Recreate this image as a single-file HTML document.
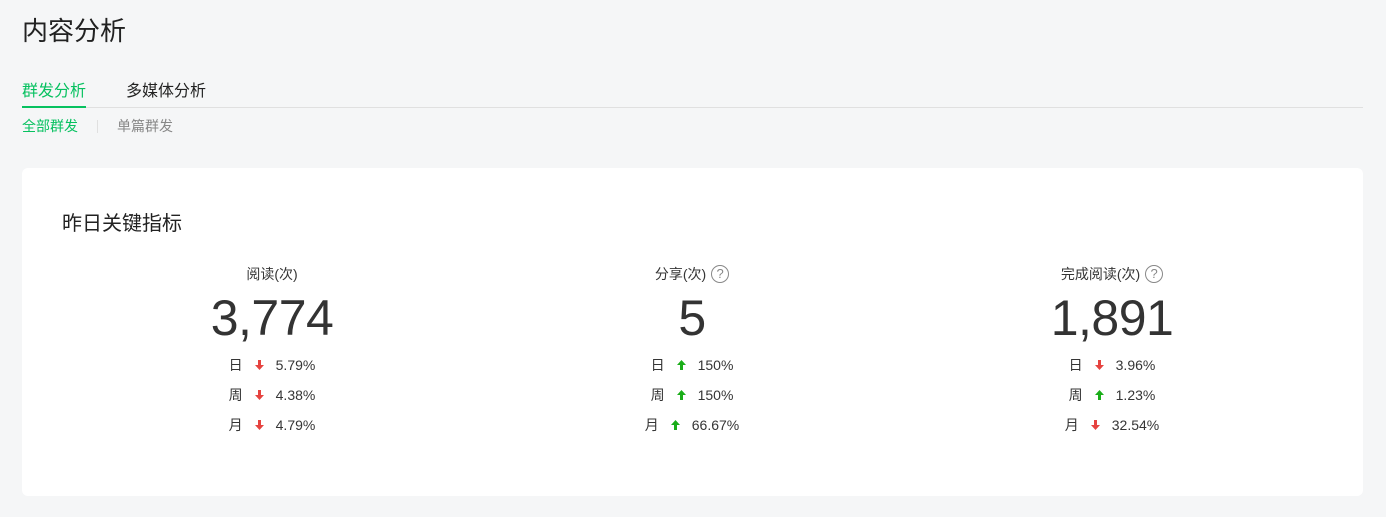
<!DOCTYPE html>
<html><head><meta charset="utf-8"><style>
*{margin:0;padding:0;box-sizing:border-box}
body{width:1386px;height:517px;background:#f5f6f7;font-family:"Liberation Sans","Noto Sans CJK SC",sans-serif;color:#353535;position:relative;overflow:hidden}
.t{position:absolute;left:22px;top:13px;font-size:26px;line-height:36px;color:#222}
.tabs{position:absolute;left:22px;top:78px;width:1341px;height:30px;border-bottom:1px solid #e0e0e0}
.tab{position:absolute;top:2px;font-size:16px;line-height:24px;height:28px}
.tab.a{left:0;color:#07c160;border-bottom:2px solid #07c160;width:64px}
.sub{position:absolute;top:116px;font-size:14px;line-height:20px}
.sep{position:absolute;left:97px;top:120px;width:1px;height:13px;background:#e0e0e0}
.card{position:absolute;left:22px;top:168px;width:1341px;height:328px;background:#fff;border-radius:6px}
.h{position:absolute;left:40px;top:44px;font-size:20px;line-height:24px;color:#222}
.col{position:absolute;top:96px;width:420px;text-align:center}
.lab{font-size:14px;line-height:20px;color:#353535;height:20px;display:flex;justify-content:center;align-items:center;gap:5px}
.q{width:18px;height:18px;border:1px solid #888;border-radius:50%;font-size:13px;line-height:16px;color:#888;text-align:center}
.num{font-size:50px;line-height:60px;color:#333;margin-top:4px;height:60px;letter-spacing:-0.5px}
.row{display:flex;justify-content:center;align-items:center;height:30px;font-size:14px;gap:12px}
.rows{margin-top:2px}
</style></head><body>
<div class="t">内容分析</div>
<div class="tabs"><div class="tab a">群发分析</div><div class="tab" style="left:104px;color:#222">多媒体分析</div></div>
<div class="sub" style="left:22px;color:#07c160">全部群发</div>
<div class="sep"></div>
<div class="sub" style="left:117px;color:#888">单篇群发</div>
<div class="card">
<div class="h">昨日关键指标</div>
<div class="col" style="left:40px">
<div class="lab">阅读(次)</div><div class="num">3,774</div>
<div class="rows">
<div class="row"><span>日</span><svg width="9" height="12" viewBox="0 0 9 12"><path d="M3 1h3v5h3L4.5 11 0 6h3z" fill="#e64340"/></svg><span>5.79%</span></div>
<div class="row"><span>周</span><svg width="9" height="12" viewBox="0 0 9 12"><path d="M3 1h3v5h3L4.5 11 0 6h3z" fill="#e64340"/></svg><span>4.38%</span></div>
<div class="row"><span>月</span><svg width="9" height="12" viewBox="0 0 9 12"><path d="M3 1h3v5h3L4.5 11 0 6h3z" fill="#e64340"/></svg><span>4.79%</span></div>
</div></div>
<div class="col" style="left:460px">
<div class="lab">分享(次)<span class="q">?</span></div><div class="num">5</div>
<div class="rows">
<div class="row"><span>日</span><svg width="9" height="12" viewBox="0 0 9 12"><path d="M3 11h3V6h3L4.5 1 0 6h3z" fill="#1aad19"/></svg><span>150%</span></div>
<div class="row"><span>周</span><svg width="9" height="12" viewBox="0 0 9 12"><path d="M3 11h3V6h3L4.5 1 0 6h3z" fill="#1aad19"/></svg><span>150%</span></div>
<div class="row"><span>月</span><svg width="9" height="12" viewBox="0 0 9 12"><path d="M3 11h3V6h3L4.5 1 0 6h3z" fill="#1aad19"/></svg><span>66.67%</span></div>
</div></div>
<div class="col" style="left:880px">
<div class="lab">完成阅读(次)<span class="q">?</span></div><div class="num">1,891</div>
<div class="rows">
<div class="row"><span>日</span><svg width="9" height="12" viewBox="0 0 9 12"><path d="M3 1h3v5h3L4.5 11 0 6h3z" fill="#e64340"/></svg><span>3.96%</span></div>
<div class="row"><span>周</span><svg width="9" height="12" viewBox="0 0 9 12"><path d="M3 11h3V6h3L4.5 1 0 6h3z" fill="#1aad19"/></svg><span>1.23%</span></div>
<div class="row"><span>月</span><svg width="9" height="12" viewBox="0 0 9 12"><path d="M3 1h3v5h3L4.5 11 0 6h3z" fill="#e64340"/></svg><span>32.54%</span></div>
</div></div>
</div>
</body></html>
